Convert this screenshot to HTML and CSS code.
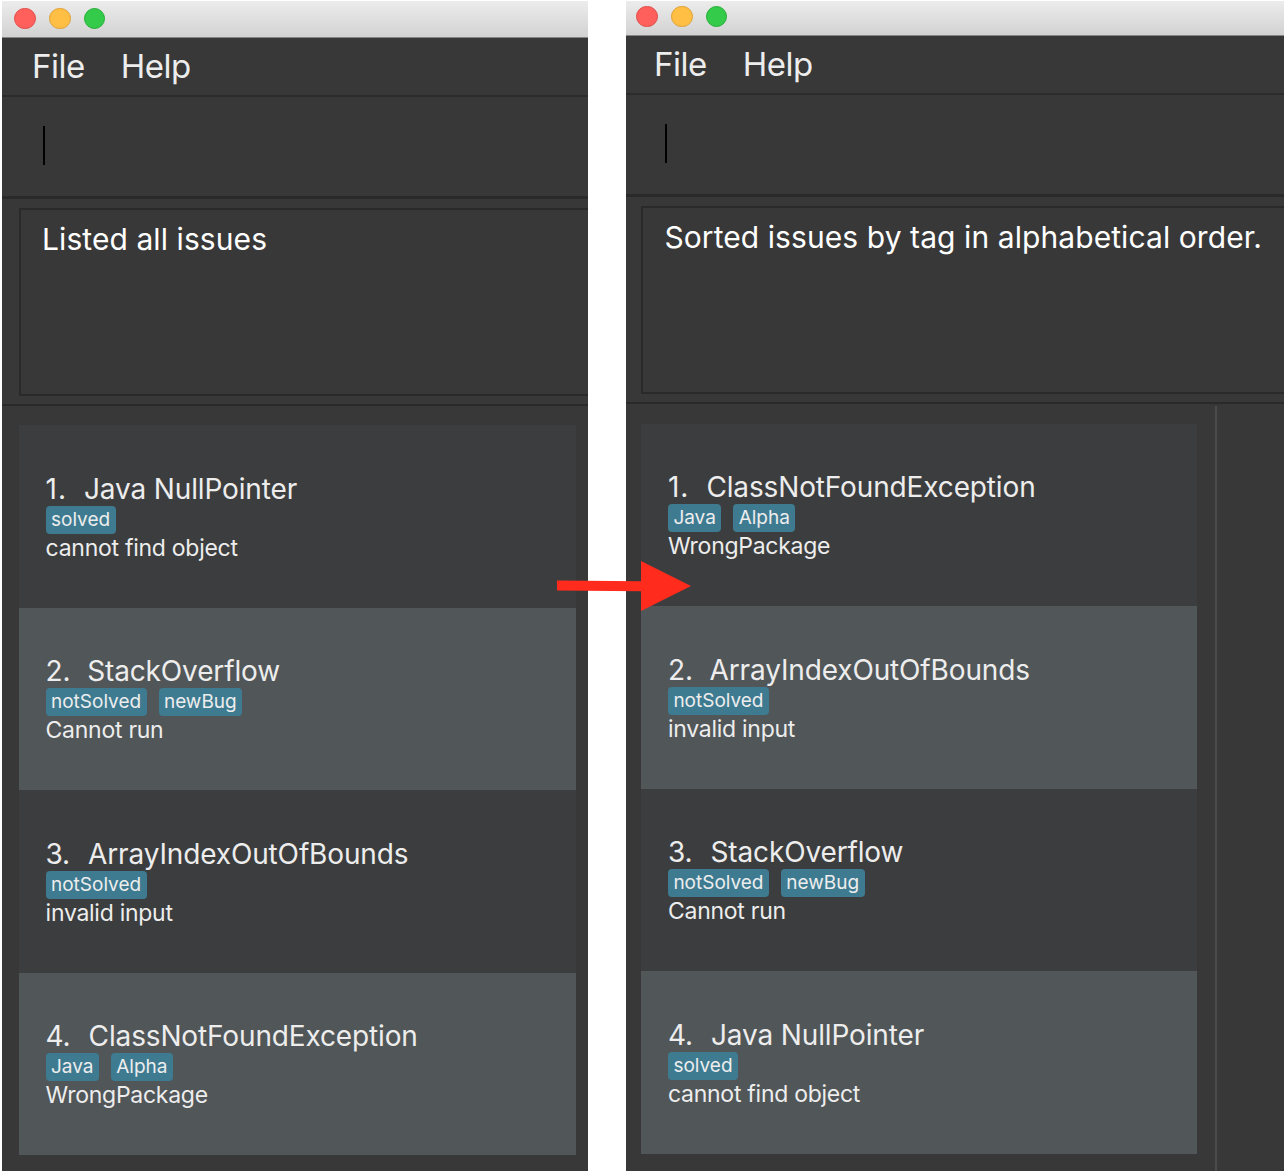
FILE: index.html
```
<!DOCTYPE html>
<html lang="en">
<head>
<meta charset="utf-8">
<title>Issue sorting</title>
<link rel="stylesheet" href="styles.css">
</head>
<body>
<main class="stage">
  <section class="window window-before">
    <header class="titlebar"><i class="light close"></i><i class="light minimize"></i><i class="light expand"></i></header>
    <nav class="menu"><span>File</span><span>Help</span></nav>
    <div class="command"><span class="caret"></span></div>
    <div class="result"><div class="result-box">Listed all issues</div></div>
    <div class="content">
      <ol class="issues">
        <li class="issue"><h2><span class="num">1.</span>Java NullPointer</h2><div class="tags"><span>solved</span></div><p>cannot find object</p></li>
        <li class="issue"><h2><span class="num">2.</span>StackOverflow</h2><div class="tags"><span>notSolved</span><span>newBug</span></div><p>Cannot run</p></li>
        <li class="issue"><h2><span class="num">3.</span>ArrayIndexOutOfBounds</h2><div class="tags"><span>notSolved</span></div><p>invalid input</p></li>
        <li class="issue"><h2><span class="num">4.</span>ClassNotFoundException</h2><div class="tags"><span>Java</span><span>Alpha</span></div><p>WrongPackage</p></li>
      </ol>
    </div>
  </section>
  <section class="window window-after">
    <header class="titlebar"><i class="light close"></i><i class="light minimize"></i><i class="light expand"></i></header>
    <nav class="menu"><span>File</span><span>Help</span></nav>
    <div class="command"><span class="caret"></span></div>
    <div class="result"><div class="result-box">Sorted issues by tag in alphabetical order.</div></div>
    <div class="content">
      <ol class="issues">
        <li class="issue"><h2><span class="num">1.</span>ClassNotFoundException</h2><div class="tags"><span>Java</span><span>Alpha</span></div><p>WrongPackage</p></li>
        <li class="issue"><h2><span class="num">2.</span>ArrayIndexOutOfBounds</h2><div class="tags"><span>notSolved</span></div><p>invalid input</p></li>
        <li class="issue"><h2><span class="num">3.</span>StackOverflow</h2><div class="tags"><span>notSolved</span><span>newBug</span></div><p>Cannot run</p></li>
        <li class="issue"><h2><span class="num">4.</span>Java NullPointer</h2><div class="tags"><span>solved</span></div><p>cannot find object</p></li>
      </ol>
      <div class="side"></div>
    </div>
  </section>
  <svg class="arrow" width="136" height="52" viewBox="0 0 136 52">
    <path d="M1 20.5 L85 21.3 V1 L135 26 L85 51 V31.3 L1 30.5 Z" fill="#ff2b1c"/>
  </svg>
</main>
</body>
</html>
```
FILE: styles.css
```
* { box-sizing: border-box; margin: 0; padding: 0; }
body { background: #fff; font-family: Inter, "Liberation Sans", sans-serif; color: #ededed; }
.stage { position: relative; display: flex; gap: 38px; width: 1286px; height: 1174px; padding: 1px 2px 3px; overflow: hidden; }
.window { --inset: 17px; display: flex; flex-direction: column; height: 1170px; background: #383838; overflow: hidden; }
.window-before { width: 586px; }
.window-after { --inset: 15.4px; width: 658px; }

.titlebar { flex: none; display: flex; gap: 13px; height: 37px; padding: 6.5px 0 0 12px; background: linear-gradient(#ececec, #d2d2d2); border-bottom: 1px solid #858585; }
.window-after .titlebar { height: 35px; padding: 4.6px 0 0 10px; }
.light { width: 21.8px; height: 21.8px; border-radius: 50%; border: 1px solid; }
.close { background: #ff605c; border-color: #e24b47; }
.minimize { background: #ffbf44; border-color: #e0a032; }
.expand { background: #34cb4b; border-color: #22ad35; }

.menu { flex: none; display: flex; gap: 36px; height: 59px; padding-left: 30px; border-bottom: 2px solid #2b2b2b; font-size: 33px; line-height: 56px; }
.window-after .menu { padding-left: 28px; }
.menu span { letter-spacing: -.5px; }

.command { flex: none; height: 102px; padding: 29px 0 0 41px; border-bottom: 3px solid #2a2a2a; }
.window-after .command { padding-left: 39px; }
.caret { display: block; width: 2px; height: 39px; background: #000; }

.result { flex: none; height: 207px; padding: 9px 0 0 var(--inset); border-bottom: 2px solid #2a2a2a; }
.result-box { height: 188px; padding: 11px 0 0 21px; border: 2px solid #2a2a2a; border-right: 0; color: #fff; font-size: 30px; line-height: 36px; letter-spacing: .08px; white-space: nowrap; }

.content { flex: 1; display: flex; min-height: 0; }
.issues { flex: none; width: 574px; padding: 19.3px 0 0 var(--inset); list-style: none; }
.window-after .issues { width: 571px; padding-top: 19.6px; }
.issue { height: 182.5px; padding: 46.5px 0 0 26.6px; background: #3c3d3e; }
.issue:nth-child(even) { background: #515658; }
.issue h2 { display: flex; font-size: 28px; font-weight: 400; line-height: 34px; letter-spacing: -.14px; white-space: nowrap; }
.num { width: 38.4px; }
.issue:nth-child(1) .num { letter-spacing: 1px; }
.issue:nth-child(2) .num { width: 41.6px; }
.issue:nth-child(3) .num { width: 42.5px; }
.issue:nth-child(4) .num { width: 43px; }
.tags { display: flex; gap: 12px; height: 28px; }
.tags span { padding: 0 5.4px; border-radius: 4px; background: #3e7b91; font-size: 19px; line-height: 28px; }
.issue p { font-size: 23px; line-height: 29px; letter-spacing: -.27px; }
.side { width: 69.5px; margin: 2px 0 0 17.5px; border-left: 2px solid #4b4b4b; }
.arrow { position: absolute; left: 556px; top: 560px; }
```
